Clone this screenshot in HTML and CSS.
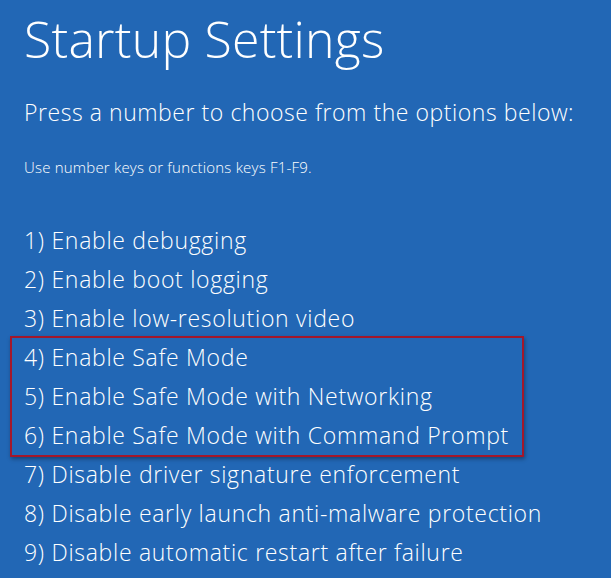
FILE: index.html
```html
<!DOCTYPE html>
<html lang="en">
<head>
  <meta charset="UTF-8">
  <title>Startup Settings</title>
  <link rel="stylesheet" href="styles.css">
</head>
<body>
  <div class="screen">
    <div class="header-title">Startup Settings</div>
    <div class="sub-title">Press a number to choose from the options below:</div>
    <div class="hint">Use number keys or functions keys F1-F9.</div>

    <div class="options">
      <div class="option">1) Enable debugging</div>
      <div class="option">2) Enable boot logging</div>
      <div class="option">3) Enable low-resolution video</div>
      <div class="highlight">
        <div class="option">4) Enable Safe Mode</div>
        <div class="option">5) Enable Safe Mode with Networking</div>
        <div class="option">6) Enable Safe Mode with Command Prompt</div>
      </div>
      <div class="option">7) Disable driver signature enforcement</div>
      <div class="option">8) Disable early launch anti-malware protection</div>
      <div class="option">9) Disable automatic restart after failure</div>
    </div>
  </div>
</body>
</html>
```

FILE: styles.css
```css
* {
  box-sizing: border-box;
}

html, body {
  margin: 0;
  padding: 0;
  height: 100%;
}

body {
  font-family: 'Open Sans', 'Noto Sans', sans-serif;
  font-weight: 300;
  background: #2267b5;
  color: #ffffff;
  overflow: hidden;
}

.screen {
  padding: 6px 0 0 24px;
}

.header-title {
  font-size: 50px;
  line-height: 66px;
  letter-spacing: 0.2px;
}

.sub-title {
  margin-top: 25px;
  font-size: 23px;
  line-height: 30px;
  letter-spacing: 0.55px;
}

.hint {
  margin-top: 30px;
  font-size: 15px;
  line-height: 20px;
  letter-spacing: 0.2px;
}

.options {
  margin-top: 44px;
}

.option {
  font-size: 23px;
  line-height: 39px;
  letter-spacing: 0.7px;
  white-space: nowrap;
}

.highlight {
  margin: -2px 0 -2px -14px;
  width: 514px;
  padding-left: 12px;
  border: 2px solid #a3172b;
  box-shadow: 1px 2px 4px rgba(0, 0, 0, 0.35);
}
```
